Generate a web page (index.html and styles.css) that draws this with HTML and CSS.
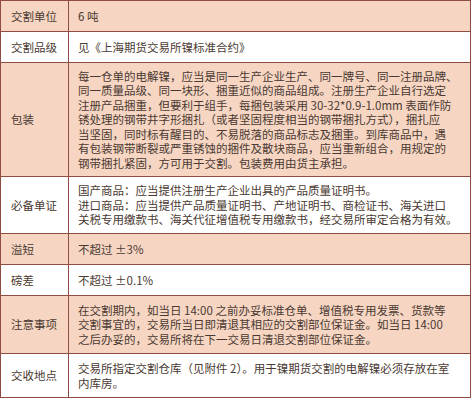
FILE: index.html
```html
<!DOCTYPE html>
<html lang="zh-CN">
<head>
<meta charset="utf-8">
<link rel="stylesheet" href="styles.css">
</head>
<body>
<table class="spec">
  <colgroup><col class="c1"><col class="c2"></colgroup>
  <tr class="peach single"><td class="k">交割单位</td><td class="v">6 吨</td></tr>
  <tr class="white single"><td class="k">交割品级</td><td class="v">见《上海期货交易所镍标准合约》</td></tr>
  <tr class="peach pack"><td class="k">包装</td><td class="v">每一仓单的电解镍，应当是同一生产企业生产、同一牌号、同一注册品牌、<br>同一质量品级、同一块形、捆重近似的商品组成。注册生产企业自行选定<br>注册产品捆重，但要利于组手，每捆包装采用 30-32*0.9-1.0mm 表面作防<br>锈处理的钢带井字形捆扎（或者坚固程度相当的钢带捆扎方式），捆扎应<br>当坚固，同时标有醒目的、不易脱落的商品标志及捆重。到库商品中，遇<br>有包装钢带断裂或严重锈蚀的捆件及散块商品，应当重新组合，用规定的<br>钢带捆扎紧固，方可用于交割。包装费用由货主承担。</td></tr>
  <tr class="white three"><td class="k">必备单证</td><td class="v">国产商品：应当提供注册生产企业出具的产品质量证明书。<br>进口商品：应当提供产品质量证明书、产地证明书、商检证书、海关进口<br>关税专用缴款书、海关代征增值税专用缴款书，经交易所审定合格为有效。</td></tr>
  <tr class="peach single"><td class="k">溢短</td><td class="v">不超过 ±3%</td></tr>
  <tr class="white single"><td class="k">磅差</td><td class="v">不超过 ±0.1%</td></tr>
  <tr class="peach notes"><td class="k">注意事项</td><td class="v">在交割期内，如当日 14:00 之前办妥标准仓单、增值税专用发票、货款等<br>交割事宜的，交易所当日即清退其相应的交割部位保证金。如当日 14:00<br>之后办妥的，交易所将在下一交易日清退交割部位保证金。</td></tr>
  <tr class="white two"><td class="k">交收地点</td><td class="v">交易所指定交割仓库（见附件 2）。用于镍期货交割的电解镍必须存放在室<br>内库房。</td></tr>
</table>
</body>
</html>
```

FILE: styles.css
```css
html, body {
  margin: 0;
  padding: 0;
  background: #ffffff;
}

.spec {
  border-collapse: collapse;
  table-layout: fixed;
  width: 470px;
  margin: 0;
  font-family: "Noto Sans CJK SC", "Noto Sans", sans-serif;
  font-size: 11.5px;
  line-height: 14.5px;
  color: #4a3932;
}

.c1 { width: 68px; }
.c2 { width: 402px; }

.spec td {
  border: 1px solid #8f4c42;
  padding: 0 9px;
  vertical-align: middle;
  white-space: nowrap;
}

.spec td.k {
  padding-left: 10px;
}

.peach td { background: #f6d6c3; }
.white td { background: #ffffff; }

.single td { height: 30px; }
.pack td { height: 113px; }
.three td { height: 56px; }
.notes td { height: 57px; }
.two td { height: 43px; }
```
